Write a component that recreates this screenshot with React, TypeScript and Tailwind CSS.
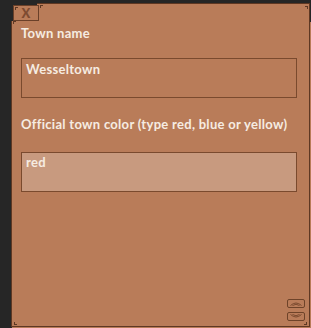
import React from "react";

const font = { fontFamily: "Lato, 'Open Sans', sans-serif" };

function Corner({ className }: { className: string }) {
  return <span className={`absolute h-[3px] w-[3px] border-[#5e3823] ${className}`} />;
}

function ScrollButton({ up }: { up?: boolean }) {
  return (
    <div className="flex h-[9px] w-[18px] items-center justify-center rounded-[2px] border border-[#6e4329]">
      <svg width="14" height="7" viewBox="0 0 14 7" className={up ? "" : "rotate-180"}>
        <path
          d="M1.5 5.5 Q7 0.5 12.5 5.5 M3.5 5.5 Q7 3 10.5 5.5"
          fill="none"
          stroke="#7a4a2f"
          strokeWidth="1"
        />
      </svg>
    </div>
  );
}

export default function App() {
  return (
    <div className="flex h-[328px] w-[311px] flex-col bg-[#262626] pl-[11px] pt-[3px]" style={font}>
      <div className="flex h-[18px] w-[299px]">
        <div className="relative z-10 -mr-[2px] w-[28px] pl-[2px] pt-[2px]">
          <div className="relative flex h-[16px] w-[26px] items-center justify-center border border-[#6a4029] bg-[#b97c59] pt-[1px] text-[13px] font-black leading-none text-[#7d4b31]">
            X
            <Corner className="left-[1px] top-[1px] border-l border-t" />
          </div>
        </div>
        <div className="relative flex-1 border-r border-t border-[#5e3823] bg-[#b97c59]">
          <Corner className="left-[3px] top-[1px] border-l border-t" />
          <Corner className="right-[1px] top-[2px] border-r border-t" />
        </div>
      </div>
      <div className="relative flex w-[299px] flex-1 flex-col border-b border-l border-r border-[#5e3823] bg-[#b97c59] pl-[9px] pr-[12px] tracking-[0.3px] shadow-[1px_1px_0_0_#b97c59]">
        <Corner className="left-[1px] top-[0px] border-l border-t" />
        <Corner className="bottom-[1px] left-[2px] border-b border-l" />
        <Corner className="bottom-[1px] right-[2px] border-b border-r" />

        <div className="mt-[4px] text-[13px] font-bold leading-[16px] text-[#f6ece2]">Town name</div>
        <div className="mt-[17px] h-[40px] w-[276px] border border-[#7a4a2e] pl-[4px] pt-[2px] text-[13px] font-bold leading-[16px] text-[#f6ece2]">
          Wesseltown
        </div>

        <div className="mt-[18px] text-[13px] font-bold leading-[16px] text-[#f6ece2]">
          Official town color (type red, blue or yellow)
        </div>
        <div className="mt-[20px] h-[40px] w-[276px] border border-[#7a4a2e] bg-[#c89a7f] pl-[4px] pt-[1px] text-[13px] font-bold leading-[16px] text-[#f6ece2]">
          red
        </div>

        <div className="mb-[5px] mr-[-8px] mt-auto flex flex-col gap-[4px] self-end">
          <ScrollButton up />
          <ScrollButton />
        </div>
      </div>
      <div className="h-[1px]" />
    </div>
  );
}
